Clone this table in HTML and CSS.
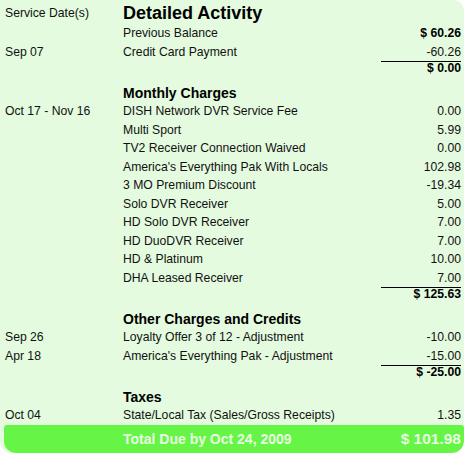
FILE: index.html
```html
<!DOCTYPE html>
<html>
<head>
<meta charset="utf-8">
<link rel="stylesheet" href="styles.css">
</head>
<body>
<div class="card">
  <div class="grid">
    <div class="hdr-date">Service Date(s)</div>
    <div class="title">Detailed Activity</div>

    <div class="date"></div><div class="desc">Previous Balance</div><div class="amt bold">$ 60.26</div>
    <div class="date">Sep 07</div><div class="desc">Credit Card Payment</div><div class="amt">-60.26</div>
    <div class="sum"><span>$ 0.00</span></div>

    <div class="heading">Monthly Charges</div>
    <div class="date">Oct 17 - Nov 16</div><div class="desc">DISH Network DVR Service Fee</div><div class="amt">0.00</div>
    <div class="date"></div><div class="desc">Multi Sport</div><div class="amt">5.99</div>
    <div class="date"></div><div class="desc">TV2 Receiver Connection Waived</div><div class="amt">0.00</div>
    <div class="date"></div><div class="desc">America's Everything Pak With Locals</div><div class="amt">102.98</div>
    <div class="date"></div><div class="desc">3 MO Premium Discount</div><div class="amt">-19.34</div>
    <div class="date"></div><div class="desc">Solo DVR Receiver</div><div class="amt">5.00</div>
    <div class="date"></div><div class="desc">HD Solo DVR Receiver</div><div class="amt">7.00</div>
    <div class="date"></div><div class="desc">HD DuoDVR Receiver</div><div class="amt">7.00</div>
    <div class="date"></div><div class="desc">HD &amp; Platinum</div><div class="amt">10.00</div>
    <div class="date"></div><div class="desc">DHA Leased Receiver</div><div class="amt">7.00</div>
    <div class="sum"><span>$ 125.63</span></div>

    <div class="heading">Other Charges and Credits</div>
    <div class="date">Sep 26</div><div class="desc">Loyalty Offer 3 of 12 - Adjustment</div><div class="amt">-10.00</div>
    <div class="date">Apr 18</div><div class="desc">America's Everything Pak - Adjustment</div><div class="amt">-15.00</div>
    <div class="sum"><span>$ -25.00</span></div>

    <div class="heading">Taxes</div>
    <div class="date">Oct 04</div><div class="desc">State/Local Tax (Sales/Gross Receipts)</div><div class="amt">1.35</div>
  </div>
  <div class="total">
    <div class="total-label">Total Due by Oct 24, 2009</div>
    <div class="total-amt">$ 101.98</div>
  </div>
</div>
</body>
</html>
```

FILE: styles.css
```css
html, body {
  margin: 0;
  padding: 0;
  background: #ffffff;
}

body {
  font-family: "Liberation Sans", Arial, sans-serif;
  font-size: 12.2px;
  color: #111;
}

.card {
  width: 464px;
  background: #e4fbdf;
  border-radius: 0 11px 12px 12px;
  padding-top: 3px;
  overflow: hidden;
}

.grid {
  display: grid;
  grid-template-columns: 118px 1fr 80px;
  padding: 0 3px 0 5px;
  line-height: 18.5px;
}

.hdr-date {
  line-height: 21px;
}

.title {
  grid-column: 2 / 4;
  font-size: 18px;
  font-weight: bold;
  line-height: 20px;
  color: #000;
}

.desc {
  white-space: nowrap;
}

.amt {
  text-align: right;
}

.bold {
  font-weight: bold;
  color: #000;
}

.sum {
  grid-column: 3;
  border-top: 1px solid #000;
  text-align: right;
  font-weight: bold;
  line-height: 13px;
  color: #000;
}

.heading {
  grid-column: 2 / 4;
  font-size: 14px;
  font-weight: bold;
  line-height: 18px;
  margin-top: 9px;
  color: #000;
}

.total {
  display: flex;
  justify-content: space-between;
  align-items: center;
  height: 28px;
  margin-left: 4px;
  padding: 0 3px 0 119px;
  background: #66f546;
  border-radius: 3px 3px 12px 12px;
  color: #e6fce0;
  font-size: 14px;
  font-weight: bold;
}

.total-amt {
  font-size: 15.5px;
}
```
